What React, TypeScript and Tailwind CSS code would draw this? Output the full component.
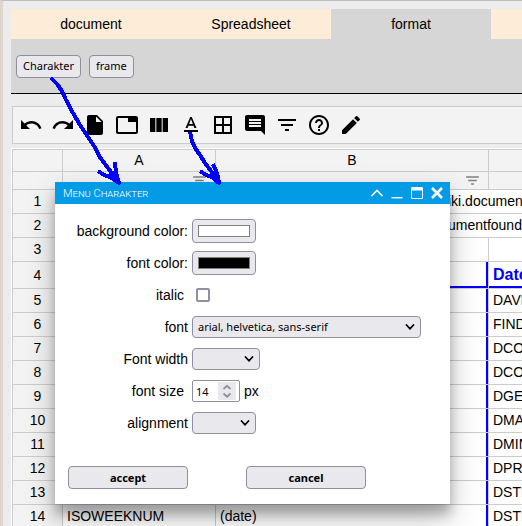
import type { ReactNode } from "react";
import {
  MdUndo,
  MdRedo,
  MdInsertDriveFile,
  MdTab,
  MdViewColumn,
  MdTextFormat,
  MdBorderAll,
  MdComment,
  MdFilterList,
  MdHelpOutline,
  MdEdit,
} from "react-icons/md";

const tabs = ["document", "Spreadsheet", "format", ""];

const tools = [
  { label: "undo", Icon: MdUndo },
  { label: "redo", Icon: MdRedo },
  { label: "new", Icon: MdInsertDriveFile },
  { label: "tab", Icon: MdTab },
  { label: "columns", Icon: MdViewColumn },
  { label: "character", Icon: MdTextFormat },
  { label: "borders", Icon: MdBorderAll },
  { label: "comment", Icon: MdComment },
  { label: "filter", Icon: MdFilterList },
  { label: "help", Icon: MdHelpOutline },
  { label: "edit", Icon: MdEdit },
];

const rows = [
  { n: 5, a: "", b: "", c: "DAVERAGE" },
  { n: 6, a: "", b: "", c: "FINDB" },
  { n: 7, a: "", b: "", c: "DCOUNT" },
  { n: 8, a: "", b: "", c: "DCOUNTA" },
  { n: 9, a: "", b: "", c: "DGET" },
  { n: 10, a: "", b: "", c: "DMAX" },
  { n: 11, a: "", b: "", c: "DMIN" },
  { n: 12, a: "", b: "", c: "DPRODUCT" },
  { n: 13, a: "", b: "", c: "DSTDEV" },
  { n: 14, a: "ISOWEEKNUM", b: "(date)", c: "DSTDEVP" },
];

const line = "border-r border-b border-[#cccccc] p-0";
const head = "border-r border-b border-[#cccccc] bg-[#f3f3f3] p-0 font-normal";
const uiFont = "font-['Noto_Sans',sans-serif] text-[11px]";
const control = "rounded-[4px] border border-[#8f8f9d] bg-[#e9e9ed]";

function RowHead({ n }: { n: number }) {
  return (
    <th scope="row" className={`${head} text-center`}>
      {n}
    </th>
  );
}

function FilterHead() {
  return (
    <th className={head}>
      <button type="button" aria-label="filter column" className="mr-[7px] ml-auto block text-[#808080]">
        <MdFilterList size={17} />
      </button>
    </th>
  );
}

function Sheet() {
  return (
    <div className="mt-1 overflow-hidden border-t border-l border-white">
      <table className="w-[630px] table-fixed border-separate border-spacing-0 border-t border-l border-[#cccccc] bg-white leading-[21px]">
        <colgroup>
          <col className="w-[50px]" />
          <col className="w-[153px]" />
          <col className="w-[273px]" />
          <col />
        </colgroup>
        <thead>
          <tr className="h-[22px]">
            <th className={head}></th>
            <th className={head}>A</th>
            <th className={head}>B</th>
            <th className={head}></th>
          </tr>
          <tr className="h-[18px]">
            <th className={head}></th>
            <FilterHead />
            <FilterHead />
            <FilterHead />
          </tr>
        </thead>
        <tbody>
          <tr className="h-6">
            <RowHead n={1} />
            <td className={line}></td>
            <td colSpan={2} className={`${line} pl-[232px]`}>iki.documentfoundation</td>
          </tr>
          <tr className="h-6">
            <RowHead n={2} />
            <td className={line}></td>
            <td colSpan={2} className={`${line} pl-[232px]`}>umentfoundation</td>
          </tr>
          <tr className="h-6">
            <RowHead n={3} />
            <td className={line}></td>
            <td className={line}></td>
            <td className={line}></td>
          </tr>
          <tr className="h-[27px]">
            <RowHead n={4} />
            <td className={`${line} shadow-[inset_0_-2px_#0000ff]`}></td>
            <td className={`${line} shadow-[inset_-2px_-2px_#0000ff]`}></td>
            <td className={`${line} pl-1 text-base leading-5 font-bold text-[#0000ff] shadow-[inset_0_-2px_#0000ff]`}>
              Date
            </td>
          </tr>
          {rows.map((r) => (
            <tr key={r.n} className="h-6">
              <RowHead n={r.n} />
              <td className={`${line} pl-1`}>{r.a}</td>
              <td className={`${line} pl-1 shadow-[inset_-2px_0_#0000ff]`}>{r.b}</td>
              <td className={`${line} pl-1`}>{r.c}</td>
            </tr>
          ))}
        </tbody>
      </table>
    </div>
  );
}

function Field({ id, label, inset, children }: { id: string; label: string; inset?: boolean; children: ReactNode }) {
  return (
    <div className="flex h-8 items-center gap-1">
      <label htmlFor={id} className={`w-[133px] text-right ${inset ? "pr-1" : ""}`}>
        {label}
      </label>
      {children}
    </div>
  );
}

function Choice({ id, width, options }: { id: string; width: string; options: string[] }) {
  return (
    <div className={`relative ${width}`}>
      <select id={id} className={`block h-[22px] w-full appearance-none pl-[5px] ${control} ${uiFont}`}>
        {options.map((o) => (
          <option key={o}>{o}</option>
        ))}
      </select>
      <svg
        className="pointer-events-none absolute inset-y-0 right-[6px] my-auto"
        width="10"
        height="6"
        viewBox="0 0 10 6"
        fill="none"
        stroke="#000"
        strokeWidth="1.7"
        strokeLinecap="round"
      >
        <path d="M1.5 1L5 4.8L8.5 1" />
      </svg>
    </div>
  );
}

function ColorBox({ id, value }: { id: string; value: string }) {
  return (
    <input
      id={id}
      type="color"
      defaultValue={value}
      className={`h-6 w-16 appearance-none p-[5px] ${control} [&::-webkit-color-swatch-wrapper]:p-0 [&::-webkit-color-swatch]:rounded-none [&::-webkit-color-swatch]:border [&::-webkit-color-swatch]:border-[#808080]`}
    />
  );
}

function WindowButtons() {
  const glyph = "block size-[14px]";
  return (
    <div className="flex items-center gap-[6px]">
      <button type="button" aria-label="roll up">
        <svg className={glyph} viewBox="0 0 14 14" fill="none" stroke="#fff" strokeWidth="1.6">
          <path d="M1.5 10L7 4.5L12.5 10" />
        </svg>
      </button>
      <button type="button" aria-label="minimize">
        <svg className={glyph} viewBox="0 0 14 14" fill="none" stroke="#fff" strokeWidth="1.4">
          <path d="M1.5 11.7H12.5" />
        </svg>
      </button>
      <button type="button" aria-label="maximize">
        <svg className={glyph} viewBox="0 0 14 14" fill="none" stroke="#fff">
          <rect x="1.5" y="1.5" width="11" height="11" rx="0.5" />
          <path d="M1.5 3H12.5" strokeWidth="3" />
        </svg>
      </button>
      <button type="button" aria-label="close">
        <svg className={glyph} viewBox="0 0 14 14" fill="none" stroke="#fff" strokeWidth="2.6">
          <path d="M2 2L12 12M12 2L2 12" />
        </svg>
      </button>
    </div>
  );
}

function CharacterDialog() {
  return (
    <section
      role="dialog"
      aria-label="Menu Charakter"
      className="absolute top-[182px] left-[55px] w-[395px] bg-white shadow-[0_14px_28px_rgba(0,0,0,0.25),0_10px_10px_rgba(0,0,0,0.22)]"
    >
      <header className="flex h-[22px] items-center justify-between bg-[#039be5] pr-[6px] pl-2 text-white">
        <h2 className="pt-[2px] font-[Roboto,sans-serif] text-[11px] leading-5 font-light [font-variant:small-caps]">
          Menu Charakter
        </h2>
        <WindowButtons />
      </header>
      <form className="pt-[11px] pb-[15px]" onSubmit={(e) => e.preventDefault()}>
        <Field id="bg" label="background color:">
          <ColorBox id="bg" value="#ffffff" />
        </Field>
        <Field id="fg" label="font color:">
          <ColorBox id="fg" value="#000000" />
        </Field>
        <Field id="italic" label="italic" inset>
          <input
            id="italic"
            type="checkbox"
            className="ml-1 size-[14px] appearance-none rounded-[2px] border-2 border-[#8f8f9d] bg-white"
          />
        </Field>
        <Field id="font" label="font">
          <Choice id="font" width="w-[229px]" options={["arial, helvetica, sans-serif"]} />
        </Field>
        <Field id="weight" label="Font width">
          <Choice id="weight" width="w-[68px]" options={[""]} />
        </Field>
        <Field id="size" label="font size" inset>
          <div className="relative w-12">
            <input
              id="size"
              type="number"
              defaultValue={14}
              className={`block h-[22px] w-full rounded-[2px] border border-[#8f8f9d] bg-white pl-[3px] [appearance:textfield] ${uiFont} [&::-webkit-inner-spin-button]:appearance-none`}
            />
            <svg
              className="pointer-events-none absolute inset-y-0 right-1 my-auto bg-[#e9e9ed]"
              width="18"
              height="18"
              viewBox="0 0 18 18"
              fill="none"
              stroke="#8f8f9d"
              strokeWidth="1.8"
            >
              <path d="M5.5 7L9 3.8L12.5 7M5.5 11.5L9 14.7L12.5 11.5" />
            </svg>
          </div>
          <span>px</span>
        </Field>
        <Field id="align" label="alignment">
          <Choice id="align" width="w-16" options={[""]} />
        </Field>
        <div className="mt-[27px] flex gap-[58px] pl-[13px]">
          <button type="submit" className={`h-[23px] w-[120px] font-bold ${control} ${uiFont}`}>
            accept
          </button>
          <button type="button" className={`h-[23px] w-[120px] font-bold ${control} ${uiFont}`}>
            cancel
          </button>
        </div>
      </form>
    </section>
  );
}

function Arrows() {
  return (
    <svg
      className="pointer-events-none absolute top-0 left-0"
      width="240"
      height="200"
      viewBox="0 0 240 200"
      fill="none"
      stroke="#0000ff"
      strokeWidth="4"
      strokeLinejoin="round"
      shapeRendering="crispEdges"
    >
      <path d="M51 78L57 84L62 91L66 100L73 113L80 125L88 137L96 149L99 156L108 168L119 183" />
      <path d="M98 171L104 175L110 177L119 183L116 173L115 162" />
      <path d="M110 175L114 173L118 182Z" />
      <path d="M190 132L192 141L195 148L200 155L205 163L211 171L219 183" />
      <path d="M200 171L206 175L212 177L219 183L217 173L213 164" />
      <path d="M211 175L215 173L218 182Z" />
    </svg>
  );
}

export default function App() {
  return (
    <div className="relative h-screen overflow-hidden border-t border-l-[3px] border-t-[#bdbdbd] border-l-[#ddd6cf] bg-[#ececec] font-['Liberation_Sans',Arial,sans-serif] text-sm text-black">
      <main className="-mt-px pt-[9px] pl-2">
        <nav className="flex overflow-hidden">
          {tabs.map((t) => (
            <button
              key={t}
              type="button"
              aria-label={t || "more"}
              className={`h-[30px] w-40 shrink-0 ${t === "format" ? "bg-[#d6d6d6]" : "bg-[#fcecd8]"}`}
            >
              {t}
            </button>
          ))}
        </nav>
        <div className="flex h-[55px] items-center gap-2 border-b border-black bg-[#d6d6d6] pl-[5px]">
          <button type="button" className={`h-[23px] px-[6px] ${control} ${uiFont}`}>
            Charakter
          </button>
          <button type="button" className={`h-[23px] px-[6px] ${control} ${uiFont}`}>
            frame
          </button>
        </div>
        <div className="mt-3 ml-px flex h-[38px] items-center gap-2 border-y border-l border-[#cccccc] bg-[#f3f3f3] pl-[6px]">
          {tools.map(({ label, Icon }) => (
            <button key={label} type="button" aria-label={label}>
              <Icon size={24} />
            </button>
          ))}
        </div>
        <Sheet />
      </main>
      <div className="absolute -top-px -left-[3px]">
        <CharacterDialog />
        <Arrows />
      </div>
    </div>
  );
}
